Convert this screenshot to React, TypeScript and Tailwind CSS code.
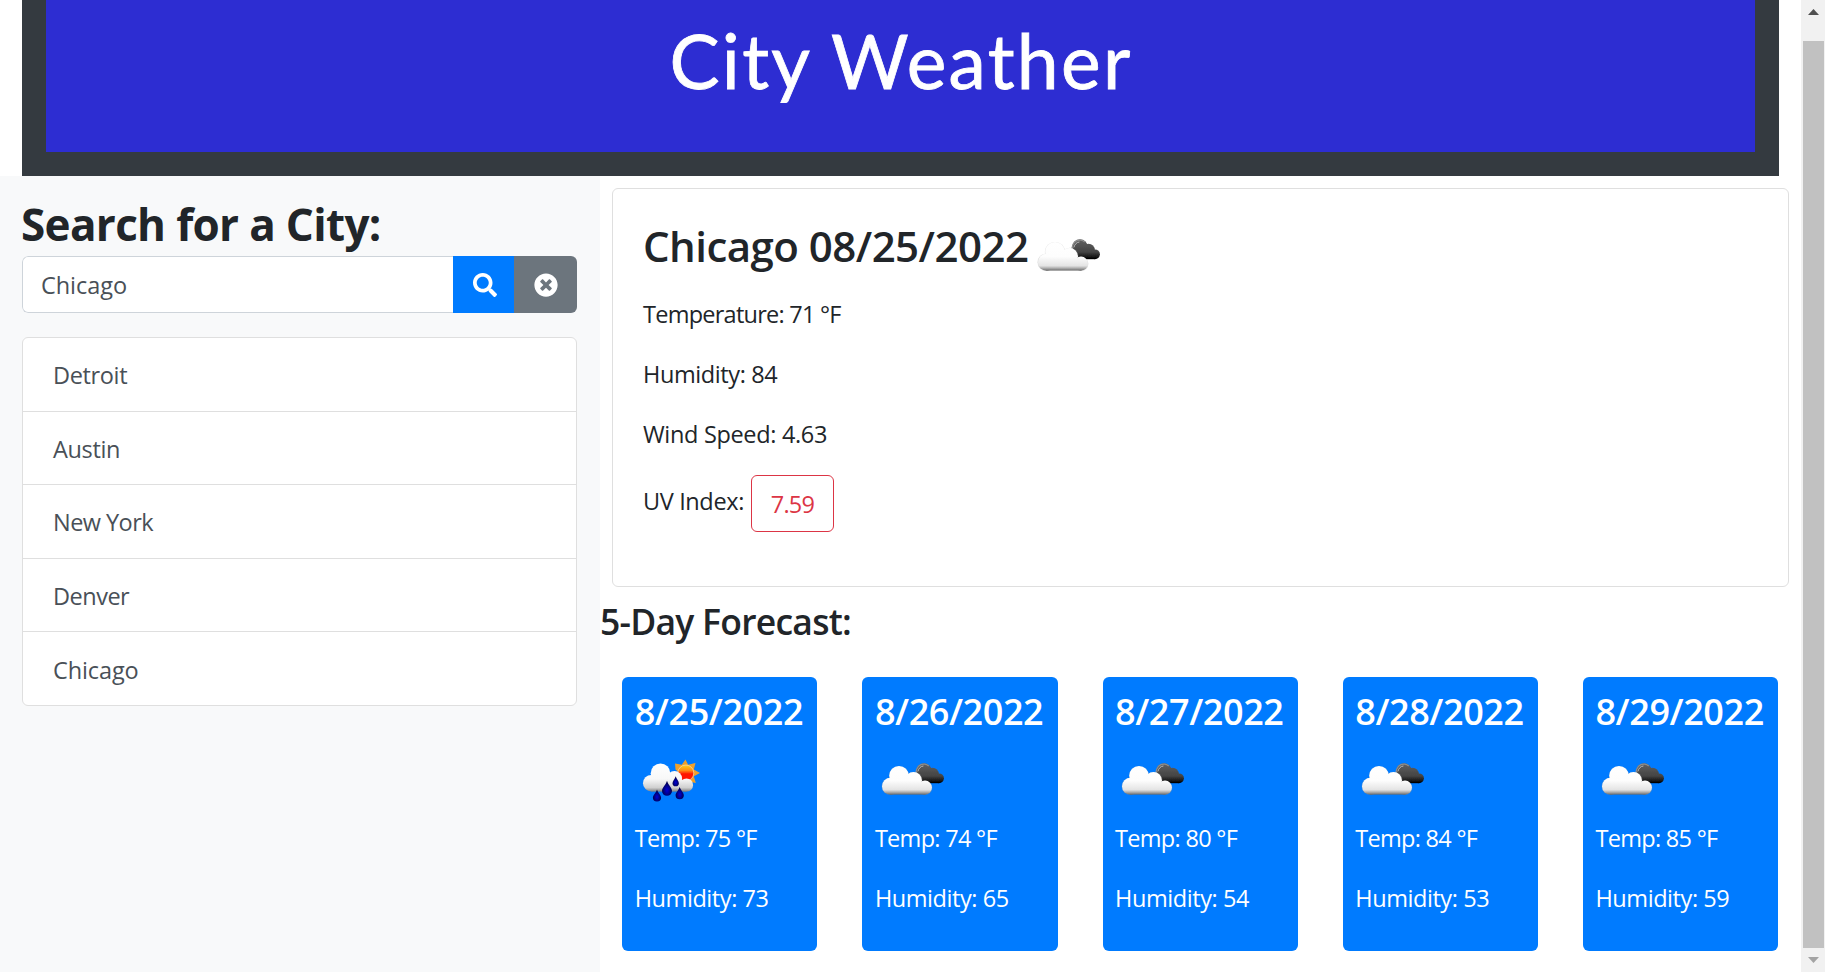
import { FaSearch, FaTimesCircle } from "react-icons/fa";

const history = [
  { name: "Detroit", tracking: "tracking-[-0.35px]" },
  { name: "Austin", tracking: "tracking-[-0.35px]" },
  { name: "New York", tracking: "tracking-[-0.55px]" },
  { name: "Denver", tracking: "tracking-[-0.5px]" },
  { name: "Chicago", tracking: "tracking-[-0.1px]" },
];

const forecast = [
  { date: "8/25/2022", icon: "rain", temp: 75, humidity: 73 },
  { date: "8/26/2022", icon: "clouds", temp: 74, humidity: 65 },
  { date: "8/27/2022", icon: "clouds", temp: 80, humidity: 54 },
  { date: "8/28/2022", icon: "clouds", temp: 84, humidity: 53 },
  { date: "8/29/2022", icon: "clouds", temp: 85, humidity: 59 },
];

function CloudsIcon() {
  return (
    <svg className="block h-[75px] w-[75px] shrink-0" viewBox="0 0 75 75" aria-hidden="true">
      <defs>
        <linearGradient id="cloudLight" gradientUnits="userSpaceOnUse" x1="0" y1="26" x2="0" y2="55">
          <stop offset="0" stopColor="#ffffff" />
          <stop offset="0.5" stopColor="#fdfdfd" />
          <stop offset="0.82" stopColor="#e4e4e4" />
          <stop offset="0.9" stopColor="#b0b0b0" />
          <stop offset="1" stopColor="#606060" />
        </linearGradient>
        <linearGradient id="cloudDark" gradientUnits="userSpaceOnUse" x1="0" y1="23" x2="0" y2="43">
          <stop offset="0" stopColor="#626262" />
          <stop offset="0.65" stopColor="#444444" />
          <stop offset="0.9" stopColor="#151515" />
          <stop offset="1" stopColor="#000000" />
        </linearGradient>
        <filter id="soften" x="-10%" y="-10%" width="120%" height="120%">
          <feGaussianBlur stdDeviation="0.45" />
        </filter>
      </defs>
      <g filter="url(#soften)">
        <g fill="url(#cloudDark)">
          <circle cx="49" cy="31" r="7.8" />
          <circle cx="57.5" cy="34" r="6.3" />
          <circle cx="64" cy="38.3" r="4.9" />
          <rect x="46" y="34" width="18" height="9.2" />
        </g>
        <path d="M40.8 32.5c1-5.5 4.300-8.700 8.900-8.300 1.800.2 3 .8 4 1.800" fill="none" stroke="#8d8d8d" strokeWidth="1.3" />
        <path d="M42.8 31.500c1-3.300 2.800-5.300 5.600-5.500" fill="none" stroke="#b9b9b9" strokeWidth="1" />
        <g fill="#8f8f8f" opacity="0.3">
          <circle cx="15.300" cy="46.300" r="8.800" />
          <circle cx="24" cy="36" r="10.100" />
          <circle cx="38.800" cy="40.500" r="8.800" />
          <circle cx="50.200" cy="47.800" r="7.200" />
        </g>
        <g fill="url(#cloudLight)">
          <circle cx="15.500" cy="46.200" r="8.500" />
          <circle cx="24" cy="35.800" r="9.800" />
          <circle cx="38.500" cy="40.500" r="8.500" />
          <circle cx="50" cy="47.600" r="7" />
          <rect x="15.500" y="42" width="35" height="12.600" />
        </g>
      </g>
    </svg>
  );
}

function RainIcon() {
  return (
    <svg className="block h-[75px] w-[75px] shrink-0" viewBox="0 0 75 75" aria-hidden="true">
      <defs>
        <linearGradient id="rainCloud" gradientUnits="userSpaceOnUse" x1="0" y1="23" x2="0" y2="52">
          <stop offset="0" stopColor="#ffffff" />
          <stop offset="0.55" stopColor="#f8f8f8" />
          <stop offset="0.85" stopColor="#d0d0d0" />
          <stop offset="1" stopColor="#777777" />
        </linearGradient>
        <linearGradient id="sun" x1="0" y1="0" x2="0" y2="1">
          <stop offset="0" stopColor="#ffd21e" />
          <stop offset="0.35" stopColor="#ff8a12" />
          <stop offset="0.55" stopColor="#ff1a00" />
          <stop offset="1" stopColor="#ff0d00" />
        </linearGradient>
        <radialGradient id="drop" cx="0.5" cy="0.62" r="0.5">
          <stop offset="0" stopColor="#0505d8" />
          <stop offset="1" stopColor="#00004e" />
        </radialGradient>
        <path id="dropShape" d="M0 -8C.8 -4 5 -.5 5 3A5 5 0 0 1 -5 3C-5 -.5 -.8 -4 0 -8Z" fill="url(#drop)" />
        <filter id="rainSoften" x="-10%" y="-10%" width="120%" height="120%">
          <feGaussianBlur stdDeviation="0.4" />
        </filter>
      </defs>
      <g filter="url(#rainSoften)">
        <path
          fill="#f0a02c"
          d="M50.500 19.500l2.600 5.300 7.400-1.700-1.700 6.400 6.200 3.500-6.200 3.200 2 6.800-7-1.600-13.300-12-.5-6 6.800 1.400z"
        />
        <circle cx="50.800" cy="33" r="8" fill="url(#sun)" stroke="#f8d9b4" strokeWidth="0.700" />
        <g fill="url(#rainCloud)">
          <circle cx="16.300" cy="43.200" r="8.300" />
          <circle cx="25.500" cy="33.300" r="9.800" />
          <circle cx="39.500" cy="38.500" r="7.600" />
          <circle cx="51.500" cy="45" r="6.600" />
          <rect x="16.300" y="40" width="35.200" height="11.600" />
        </g>
        <use href="#dropShape" transform="translate(32 48.300) scale(1 0.930)" />
        <use href="#dropShape" transform="translate(40.700 41.300) scale(0.640 0.620)" />
        <use href="#dropShape" transform="translate(22 55.500) scale(0.820 0.740)" />
        <use href="#dropShape" transform="translate(44.700 53) scale(0.820 0.780)" />
      </g>
    </svg>
  );
}

function Header() {
  return (
    <header className="ml-[22px] h-[176px] w-[1757px] bg-[#343a40] px-6 pb-6">
      <div className="h-[152px] bg-[#2d2dd2] pt-[15px] text-center">
        <h1 className="pl-[1px] font-['Lato',sans-serif] text-[75px] leading-[90px] tracking-[2.3px] text-white [-webkit-text-stroke:0.8px_#fff]">
          City Weather
        </h1>
      </div>
    </header>
  );
}

function Sidebar() {
  return (
    <aside className="w-[600px] shrink-0 bg-[#f8f9fa] pt-[21px] pr-[23px] pl-[21px]">
      <h2 className="text-[44px] leading-[54px] font-bold tracking-[-0.66px]">Search for a City:</h2>
      <div className="mt-[5px] ml-px flex h-[57px] overflow-hidden rounded-md">
        <input
          className="min-w-0 flex-1 rounded-l-md border border-r-0 border-[#ced4da] bg-white pt-px pl-[18px] tracking-[-0.05px] text-[#495057] outline-none"
          defaultValue="Chicago"
          aria-label="City"
        />
        <button className="flex w-[61px] items-center justify-center bg-[#007bff] pl-[2px] text-2xl text-white">
          <FaSearch />
        </button>
        <button className="flex w-[63px] items-center justify-center bg-[#6c757d] text-2xl text-white">
          <FaTimesCircle />
        </button>
      </div>
      <ul className="mt-6 ml-px overflow-hidden rounded-md border border-[#dfdfdf] bg-white text-[#495057]">
        {history.map((city) => (
          <li
            key={city.name}
            className="flex h-[73.600px] items-center border-b border-[#dfdfdf] pt-[2px] pl-[30px] last:h-[72.600px] last:border-b-0"
          >
            <span className={city.tracking}>{city.name}</span>
          </li>
        ))}
      </ul>
    </aside>
  );
}

function CurrentWeather() {
  return (
    <section className="mt-3 ml-3 h-[399px] w-[1177px] rounded-md border border-[#dfdfdf] bg-white pt-[27px] pl-[30px]">
      <div className="flex h-[75px]">
        <h2 className="w-[388px] pt-[5px] text-[42px] leading-[50px] font-semibold tracking-[-0.53px] whitespace-nowrap">
          Chicago 08/25/2022
        </h2>
        <CloudsIcon />
      </div>
      <p className="mt-[5px] tracking-[-0.75px]">Temperature: 71 °F</p>
      <p className="mt-6 tracking-[-0.4px]">Humidity: 84</p>
      <p className="mt-6 tracking-[-0.33px]">Wind Speed: 4.63</p>
      <div className="mt-[23px] flex h-[57px] items-center">
        <span className="w-[108px] pb-[6px] tracking-[-0.37px]">UV Index:</span>
        <button className="h-[57px] w-[83px] rounded-md border border-[#dc3545] tracking-[-0.8px] text-[#dc3545]">
          7.59
        </button>
      </div>
    </section>
  );
}

function Forecast() {
  return (
    <section>
      <h3 className="mt-[12px] text-[35.500px] leading-[44px] font-semibold tracking-[-0.75px]">5-Day Forecast:</h3>
      <div className="mt-[34px] flex gap-[45px] pl-[22.200px]">
        {forecast.map((day) => (
          <article
            key={day.date}
            className="h-[274px] w-[195.200px] shrink-0 rounded-md bg-[#007bff] pt-[13px] pl-[12.500px] text-white"
          >
            <h4 className="text-[36px] leading-[44px] font-semibold tracking-[-0.42px]">{day.date}</h4>
            <div className="mt-1.5">{day.icon === "rain" ? <RainIcon /> : <CloudsIcon />}</div>
            <p className="mt-[5px] tracking-[-0.7px]">Temp: {day.temp} °F</p>
            <p className="mt-6 tracking-[-0.43px]">Humidity: {day.humidity}</p>
          </article>
        ))}
      </div>
    </section>
  );
}

function Scrollbar() {
  return (
    <div className="flex h-full w-6 shrink-0 flex-col items-center bg-[#f1f1f1]" aria-hidden="true">
      <svg className="h-[41px] w-6 shrink-0" viewBox="0 0 24 41">
        <path d="M7 15h11L12.500 9z" fill="#505050" />
      </svg>
      <div className="w-[21px] flex-1 bg-[#c1c1c1]" />
      <svg className="h-6 w-6 shrink-0" viewBox="0 0 24 24">
        <path d="M7 9h11l-5.500 6z" fill="#a3a3a3" />
      </svg>
    </div>
  );
}

export default function App() {
  return (
    <div className="flex h-[972px] w-[1825px] overflow-hidden bg-white font-['Open_Sans','Noto_Sans',sans-serif] text-[23.500px] leading-9 text-[#212529]">
      <div className="flex w-[1801px] shrink-0 flex-col">
        <Header />
        <main className="flex flex-1">
          <Sidebar />
          <div className="flex-1">
            <CurrentWeather />
            <Forecast />
          </div>
        </main>
      </div>
      <Scrollbar />
    </div>
  );
}
